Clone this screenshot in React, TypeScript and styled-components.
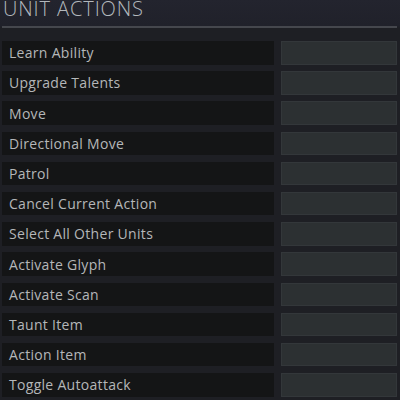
import React from "react"
import styled, {createGlobalStyle} from "styled-components"

const GlobalStyle = createGlobalStyle`
  html, body {
    margin: 0;
    padding: 0;
    background: #1e1f24;
  }
  body {
    font-family: "Open Sans", "Noto Sans", sans-serif;
  }
`;

const Panel = styled.div`
  width: 400px;
  height: 400px;
  overflow: hidden;
  background: linear-gradient(to bottom, #23242e 0px, #20212a 26px, #1e1f24 28px);
`;

const Header = styled.div`
  height: 28px;
  margin: 0 3px 0 2px;
  border-bottom: 2px solid #45474d;
  box-sizing: border-box;
  display: flex;
  align-items: flex-start;
`;

const Title = styled.h1`
  margin: 0 0 0 1px;
  font-weight: 300;
  font-size: 20px;
  letter-spacing: 0.9px;
  color: #b3b8bd;
  line-height: 18px;
`;

const List = styled.div`
  display: flex;
  flex-direction: column;
  gap: 6.7px;
  padding: 13px 3px 0 2px;
`;

const Row = styled.div`
  display: flex;
  gap: 7px;
  height: 23.5px;
`;

const Label = styled.div`
  flex: 0 0 272px;
  background: #141516;
  color: #b4b7b9;
  font-size: 14px;
  letter-spacing: 0.3px;
  padding-left: 7px;
  box-sizing: border-box;
  display: flex;
  align-items: center;
`;

const KeyBox = styled.div`
  flex: 1;
  background: #2c3032;
  border: 1px solid #33373a;
  box-sizing: border-box;
`;

const actions = [
    "Learn Ability",
    "Upgrade Talents",
    "Move",
    "Directional Move",
    "Patrol",
    "Cancel Current Action",
    "Select All Other Units",
    "Activate Glyph",
    "Activate Scan",
    "Taunt Item",
    "Action Item",
    "Toggle Autoattack",
];

export default function App() {
    return (
        <Panel>
            <GlobalStyle/>
            <Header>
                <Title>UNIT ACTIONS</Title>
            </Header>
            <List>
                {actions.map(a => (
                    <Row key={a}>
                        <Label>{a}</Label>
                        <KeyBox/>
                    </Row>
                ))}
            </List>
        </Panel>
    )
}
